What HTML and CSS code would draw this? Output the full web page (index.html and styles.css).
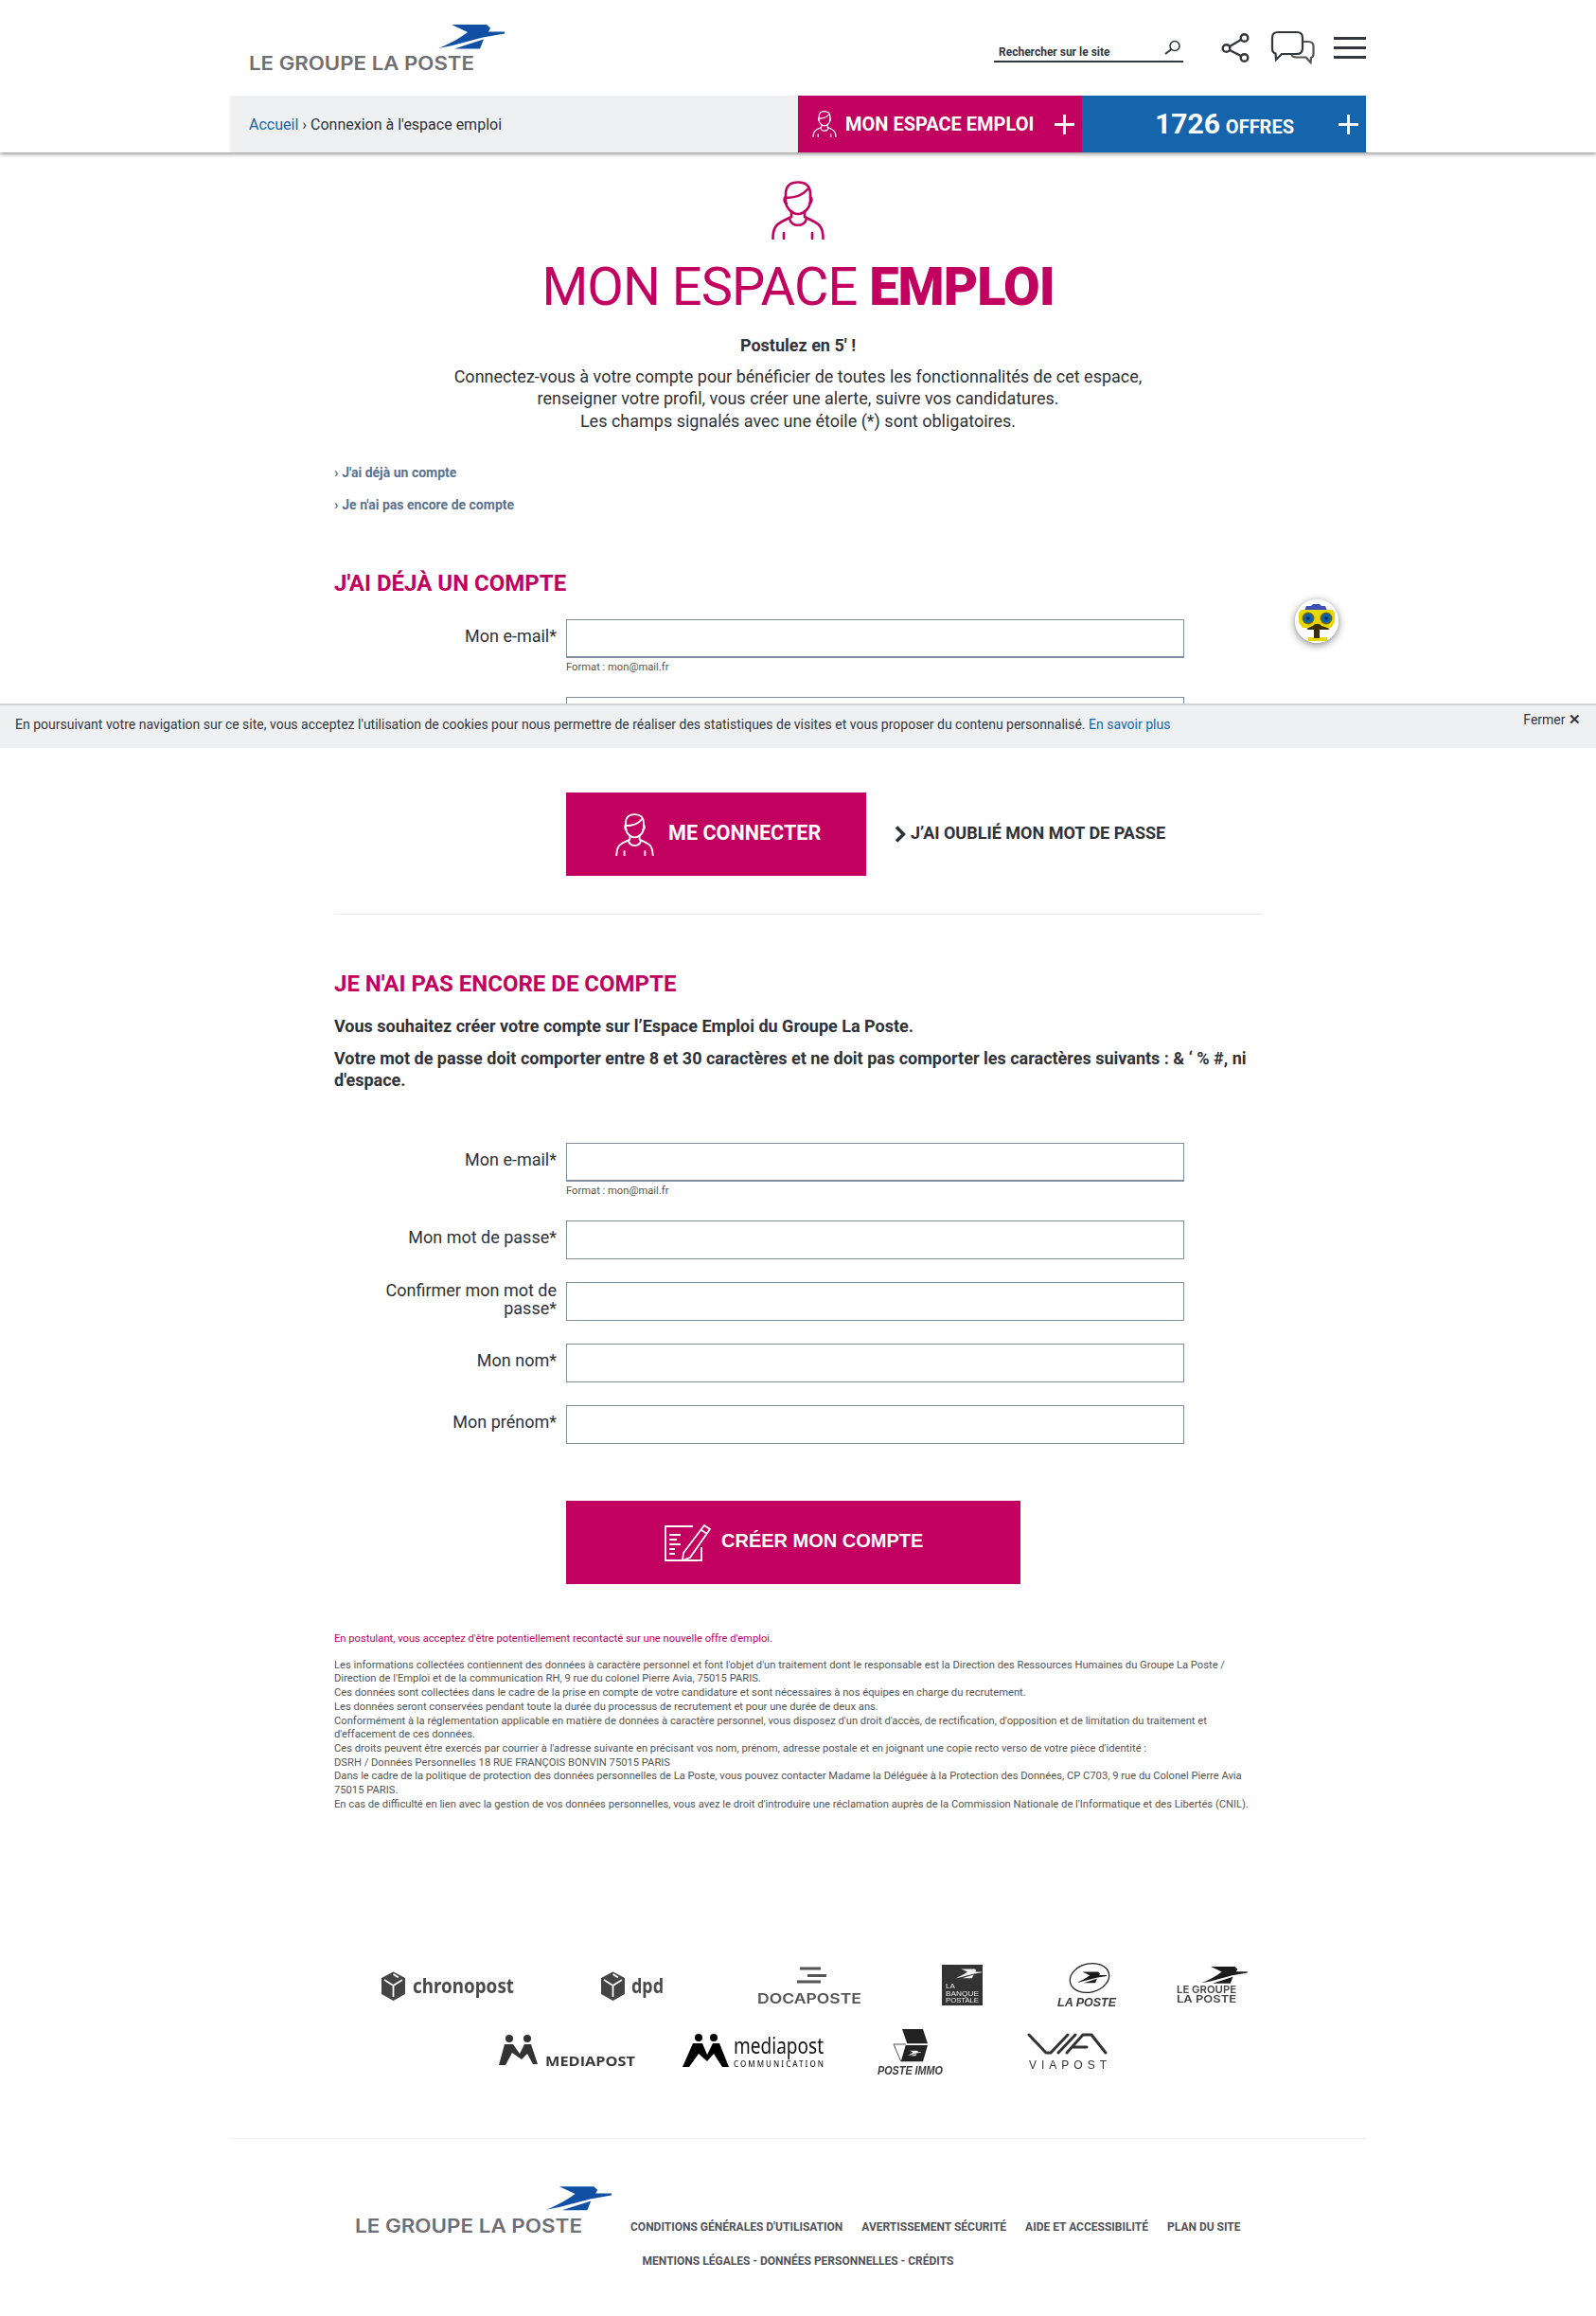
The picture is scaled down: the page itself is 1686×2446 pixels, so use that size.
FILE: index.html
```html
<!DOCTYPE html>
<html lang="fr">
<head>
<meta charset="utf-8">
<title>Mon espace emploi</title>
<link rel="stylesheet" href="styles.css">
</head>
<body>
<svg class="defs" width="0" height="0" aria-hidden="true">
  <symbol id="person" viewBox="0 0 56 62">
    <g fill="none" stroke="currentColor" stroke-width="2.6" stroke-linecap="round" stroke-linejoin="round">
      <path d="M15 14C15 5 20 1.500 28 1.500S41 5 41 14V21C41 29 34 35 28 35S15 29 15 21Z"/>
      <path d="M15 18C24 18 33 15 38 9"/>
      <path d="M15 17C13 18 13 23 16 24M41 17C43 18 43 23 40 24"/>
      <path d="M21 32V38L11 43C5 46 1.500 50 1.500 61M35 32V38L45 43C51 46 54.500 50 54.500 61"/>
      <path d="M19 40C21 49 35 49 37 40"/>
      <path d="M13 55V61M43 55V61"/>
    </g>
  </symbol>
  <symbol id="bird" viewBox="0 0 70 26">
    <path fill="currentColor" d="M14 0H51L55 3.500 53 7.500H70V9.500L47 13.500 15 22 0 25C10 21 22 15 31 8Z"/>
    <path fill="currentColor" d="M17 25.500 48 15.500 44 25.500Z"/>
  </symbol>
  <symbol id="plus" viewBox="0 0 21 21">
    <path fill="none" stroke="currentColor" stroke-width="3" d="M10.500 0V21M0 10.500H21"/>
  </symbol>
</svg>

<header class="site-header">
  <div class="wrap">
    <div class="top-row">
      <a class="brand" href="#">
        <svg class="brand-logo" width="270" height="48" viewBox="0 0 270 48">
          <use href="#bird" x="200" y="0" width="70" height="26" class="bird-blue"/>
          <text x="0" y="47.500" class="brand-text" textLength="238" lengthAdjust="spacingAndGlyphs">LE GROUPE LA POSTE</text>
        </svg>
      </a>
      <div class="tools">
        <div class="search">
          <span>Rechercher sur le site</span>
          <svg width="18" height="16" viewBox="0 0 18 16"><circle cx="11" cy="6.500" r="5" fill="none" stroke="#33373d" stroke-width="1.500"/><path d="M7.500 10 1 15" stroke="#33373d" stroke-width="2"/></svg>
        </div>
        <svg class="tool-share" width="28" height="31" viewBox="0 0 28 31"><g fill="none" stroke="#33373d" stroke-width="2.400"><circle cx="23.500" cy="5" r="3.800"/><circle cx="23.500" cy="26" r="3.800"/><circle cx="4.500" cy="16" r="3.800"/><path d="M8 14 20 7M8 18 20 24"/></g></svg>
        <svg class="tool-chat" width="46" height="34" viewBox="0 0 46 34"><g fill="none" stroke="#33373d" stroke-width="2.200"><path d="M7 1H27C31 1 33 3.500 33 7V18C33 21.500 31 24 27 24H11L5 30 4.500 23.500C2 23 1 20.500 1 18V7C1 3.500 3 1 7 1Z"/><path d="M33.500 11H39C42.500 11 44.500 13 44.500 16V24C44.500 26 43.500 27.500 42 28L41.500 33 36.500 27.500H26C23 27.500 22 26.500 21.500 24.500" stroke="#555"/></g></svg>
        <div class="burger"><i></i><i></i><i></i></div>
      </div>
    </div>
    <nav class="nav-row">
      <div class="crumbs"><a href="#">Accueil</a> › Connexion à l'espace emploi</div>
      <a class="nav-espace" href="#">
        <svg class="nav-person" width="26" height="28"><use href="#person"/></svg>
        <span>MON ESPACE EMPLOI</span>
        <svg class="nav-plus" width="21" height="21"><use href="#plus"/></svg>
      </a>
      <a class="nav-offres" href="#">
        <span class="count">1726</span><span class="offres">OFFRES</span>
        <svg class="nav-plus" width="21" height="21"><use href="#plus"/></svg>
      </a>
    </nav>
  </div>
</header>

<main class="main">
  <div class="hero">
    <svg class="hero-icon" width="56" height="62"><use href="#person"/></svg>
    <h1>MON ESPACE <strong>EMPLOI</strong></h1>
    <p class="hero-strong">Postulez en 5' !</p>
    <p class="hero-text">Connectez-vous à votre compte pour bénéficier de toutes les fonctionnalités de cet espace,<br>renseigner votre profil, vous créer une alerte, suivre vos candidatures.<br>Les champs signalés avec une étoile (*) sont obligatoires.</p>
  </div>

  <ul class="anchors">
    <li><a href="#c1">J'ai déjà un compte</a></li>
    <li><a href="#c2">Je n'ai pas encore de compte</a></li>
  </ul>

  <section id="c1">
    <h2 class="section-title first">J'AI DÉJÀ UN COMPTE</h2>
    <form class="form">
      <div class="row">
        <label>Mon e-mail*</label>
        <div class="field"><input type="text" class="strong-input"><small>Format : mon@mail.fr</small></div>
      </div>
      <div class="row">
        <label>Mon mot de passe*</label>
        <div class="field"><input type="password"></div>
      </div>
      <div class="actions">
        <a class="btn btn-login" href="#">
          <svg width="41" height="45"><use href="#person"/></svg>
          <span>ME CONNECTER</span>
        </a>
        <a class="forgot" href="#">
          <svg width="12" height="18" viewBox="0 0 12 18"><path d="M2 1.500 9.500 9 2 16.500" fill="none" stroke="#2e3238" stroke-width="3.500"/></svg>
          <span>J’AI OUBLIÉ MON MOT DE PASSE</span>
        </a>
      </div>
    </form>
  </section>

  <hr class="sep">

  <section id="c2">
    <h2 class="section-title">JE N'AI PAS ENCORE DE COMPTE</h2>
    <p class="bold-a">Vous souhaitez créer votre compte sur l’Espace Emploi du Groupe La Poste.</p>
    <p class="bold-b">Votre mot de passe doit comporter entre 8 et 30 caractères et ne doit pas comporter les caractères suivants : &amp; ‘ % #, ni d'espace.</p>
    <form class="form form-new">
      <div class="row">
        <label>Mon e-mail*</label>
        <div class="field"><input type="text" class="strong-input"><small>Format : mon@mail.fr</small></div>
      </div>
      <div class="row"><label>Mon mot de passe*</label><div class="field"><input type="password"></div></div>
      <div class="row"><label>Confirmer mon mot de passe*</label><div class="field"><input type="password"></div></div>
      <div class="row"><label>Mon nom*</label><div class="field"><input type="text"></div></div>
      <div class="row"><label>Mon prénom*</label><div class="field"><input type="text"></div></div>
      <div class="actions">
        <button class="btn btn-create" type="button">
          <svg width="50" height="40" viewBox="0 0 50 40"><g fill="none" stroke="#fff" stroke-width="1.800"><path d="M31 3H2V39H40V25"/><path d="M6 12H18M6 17H14M6 22H18M6 27H12M6 32H12" stroke-width="2"/><path d="M43 2 49 6 28 36 20 39 21 31ZM40 7 46 11"/></g></svg>
          <span>CRÉER MON COMPTE</span>
        </button>
      </div>
    </form>
  </section>

  <p class="legal-red">En postulant, vous acceptez d'être potentiellement recontacté sur une nouvelle offre d'emploi.</p>
  <p class="legal">Les informations collectées contiennent des données à caractère personnel et font l'objet d'un traitement dont le responsable est la Direction des Ressources Humaines du Groupe La Poste / Direction de l'Emploi et de la communication RH, 9 rue du colonel Pierre Avia, 75015 PARIS.<br>
  Ces données sont collectées dans le cadre de la prise en compte de votre candidature et sont nécessaires à nos équipes en charge du recrutement.<br>
  Les données seront conservées pendant toute la durée du processus de recrutement et pour une durée de deux ans.<br>
  Conformément à la réglementation applicable en matière de données à caractère personnel, vous disposez d'un droit d'accès, de rectification, d'opposition et de limitation du traitement et d'effacement de ces données.<br>
  Ces droits peuvent être exercés par courrier à l'adresse suivante en précisant vos nom, prénom, adresse postale et en joignant une copie recto verso de votre pièce d'identité :<br>
  DSRH / Données Personnelles 18 RUE FRANÇOIS BONVIN 75015 PARIS<br>
  Dans le cadre de la politique de protection des données personnelles de La Poste, vous pouvez contacter Madame la Déléguée à la Protection des Données, CP C703, 9 rue du Colonel Pierre Avia 75015 PARIS.<br>
  En cas de difficulté en lien avec la gestion de vos données personnelles, vous avez le droit d'introduire une réclamation auprès de la Commission Nationale de l'Informatique et des Libertés (CNIL).</p>
</main>

<section class="wrap partners">
  <div class="logo-row row-one">
    <svg class="logo lg-chrono" width="140" height="50" viewBox="0 0 140 50">
      <path fill="#444" d="M12.500 9.500 25 16V33L12.500 40 0 33V16Z"/>
      <path fill="none" stroke="#fff" stroke-width="1.800" d="M3 18 12.500 24 22 18M12.500 24V36M12.500 12 18 15.500"/>
      <text x="33" y="32" class="lg-round" textLength="107" lengthAdjust="spacingAndGlyphs">chronopost</text>
    </svg>
    <svg class="logo lg-dpd" width="66" height="50" viewBox="0 0 66 50">
      <path fill="#444" d="M12.500 9.500 25 16V33L12.500 40 0 33V16Z"/>
      <path fill="none" stroke="#fff" stroke-width="1.800" d="M3 18 12.500 24 22 18M12.500 24V36M12.500 12 18 15.500"/>
      <text x="32" y="32" class="lg-round" textLength="34" lengthAdjust="spacingAndGlyphs">dpd</text>
    </svg>
    <svg class="logo lg-doca" width="110" height="50" viewBox="0 0 110 50">
      <path fill="#555" d="M45 4.500H67V7.500H45ZM53 12H73V15H53ZM42 18.500H67V21.500H42Z"/>
      <text x="0" y="43" class="lg-doca-text" textLength="110" lengthAdjust="spacingAndGlyphs">DOCAPOSTE</text>
    </svg>
    <svg class="logo lg-banque" width="43" height="50" viewBox="0 0 43 50">
      <rect x="0" y="2" width="43" height="43" fill="#333"/>
      <use href="#bird" x="15" y="6" width="27" height="11" class="bird-white"/>
      <text x="4" y="27" class="lg-banque-text">LA</text>
      <text x="4" y="34.500" class="lg-banque-text" textLength="35" lengthAdjust="spacingAndGlyphs">BANQUE</text>
      <text x="4" y="42" class="lg-banque-text" textLength="35" lengthAdjust="spacingAndGlyphs">POSTALE</text>
    </svg>
    <svg class="logo lg-laposte" width="62" height="50" viewBox="0 0 62 50">
      <ellipse cx="34" cy="16" rx="21" ry="15" fill="none" stroke="#222" stroke-width="1.300" transform="rotate(-14 34 16)"/>
      <use href="#bird" x="20" y="9" width="32" height="13" class="bird-dark"/>
      <text x="0" y="46" class="lg-italic" textLength="62" lengthAdjust="spacingAndGlyphs">LA POSTE</text>
    </svg>
    <svg class="logo lg-groupe" width="75" height="50" viewBox="0 0 75 50">
      <use href="#bird" x="26" y="4" width="49" height="18" class="bird-dark"/>
      <text x="0" y="32" class="lg-groupe-text" textLength="63" lengthAdjust="spacingAndGlyphs">LE GROUPE</text>
      <text x="0" y="42" class="lg-groupe-text" textLength="63" lengthAdjust="spacingAndGlyphs">LA POSTE</text>
    </svg>
  </div>
  <div class="logo-row row-two">
    <svg class="logo lg-media" width="144" height="50" viewBox="0 0 144 50">
      <circle cx="11" cy="11" r="4" fill="#333"/><circle cx="30" cy="11" r="4" fill="#333"/>
      <path fill="#333" d="M6 17H15L22 27 27 17H34L41 38H36L30 27 24 33 14 26 7 39H0Z"/>
      <text x="49" y="40" class="lg-media-text" textLength="95" lengthAdjust="spacingAndGlyphs">MEDIAPOST</text>
    </svg>
    <svg class="logo lg-media2" width="149" height="50" viewBox="0 0 149 50">
      <circle cx="17" cy="10" r="4" fill="#000"/><circle cx="33" cy="10" r="4" fill="#000"/>
      <path fill="#000" d="M11 16H21L26 28 32 16H39L49 41H42L33 27 26 35 17 27 7 41H0Z"/>
      <text x="54" y="27" class="lg-media2-text" textLength="95" lengthAdjust="spacingAndGlyphs">mediapost</text>
      <text x="54" y="41" class="lg-media2-sub" textLength="95" lengthAdjust="spacing">COMMUNICATION</text>
    </svg>
    <svg class="logo lg-immo" width="69" height="50" viewBox="0 0 69 50">
      <path fill="#222" d="M26 1H48L53 16.300H31.300ZM29.700 18H53L48 35.300H24.700Z"/>
      <path fill="none" stroke="#555" d="M17 17H30M17 17 24.700 35"/>
      <use href="#bird" x="31" y="23" width="15" height="7" class="bird-white"/>
      <text x="0" y="49" class="lg-italic" textLength="69" lengthAdjust="spacingAndGlyphs">POSTE IMMO</text>
    </svg>
    <svg class="logo lg-via" width="84" height="50" viewBox="0 0 84 50">
      <g fill="none" stroke="#333" stroke-width="3" stroke-linecap="round" stroke-linejoin="round"><path d="M1 7 19 26H24L42 7"/><path d="M32 26 50 7"/><path d="M41 26 58 7H67L82 26"/><path d="M48 20H62"/></g>
      <text x="1" y="43" class="lg-via-text" textLength="82" lengthAdjust="spacing">VIAPOST</text>
    </svg>
  </div>
</section>

<footer class="wrap site-footer">
  <div class="foot-row">
    <svg class="foot-logo" width="271" height="51" viewBox="0 0 271 51">
      <use href="#bird" x="202" y="0" width="69" height="26" class="bird-blue"/>
      <text x="0" y="49" class="brand-text" textLength="240" lengthAdjust="spacingAndGlyphs">LE GROUPE LA POSTE</text>
    </svg>
    <ul class="foot-links">
      <li><a href="#">CONDITIONS GÉNÉRALES D'UTILISATION</a></li>
      <li><a href="#">AVERTISSEMENT SÉCURITÉ</a></li>
      <li><a href="#">AIDE ET ACCESSIBILITÉ</a></li>
      <li><a href="#">PLAN DU SITE</a></li>
    </ul>
  </div>
  <p class="foot-legal">MENTIONS LÉGALES - DONNÉES PERSONNELLES - CRÉDITS</p>
</footer>

<div class="cookie">
  <p>En poursuivant votre navigation sur ce site, vous acceptez l'utilisation de cookies pour nous permettre de réaliser des statistiques de visites et vous proposer du contenu personnalisé. <a href="#">En savoir plus</a></p>
  <span class="cookie-close">Fermer <b>✕</b></span>
</div>

<div class="bot">
  <svg width="46" height="46" viewBox="0 0 46 46">
    <ellipse cx="23" cy="23" rx="23" ry="23" fill="#fff"/>
    <path fill="#3b4fb5" d="M10 12 12 7H17L19 5H26L28 7H32L34 12Z"/>
    <path fill="#e8d800" d="M9 11H37C40 11 42 13 42 16V24L38 30H8L4 24V16C4 13 6 11 9 11Z"/>
    <circle cx="14" cy="20" r="6.500" fill="#6f6a10"/><circle cx="33" cy="20" r="6.500" fill="#6f6a10"/>
    <circle cx="14" cy="20" r="5" fill="#0d5fb0"/><circle cx="33" cy="20" r="5" fill="#0d5fb0"/>
    <circle cx="14" cy="20" r="1.800" fill="#06264f"/><circle cx="33" cy="20" r="1.800" fill="#06264f"/>
    <path fill="#3a2e08" d="M12 31 19 28C21 25 26 25 28 28L37 31 35 32 26 32V41H20V32L14 32Z"/>
    <path fill="#e8d800" d="M14 40H20V41H26V40H34V44H14Z"/>
  </svg>
</div>
</body>
</html>
```
FILE: styles.css
```css
* { box-sizing: border-box; }
html, body { margin: 0; padding: 0; }
body { font-family: Roboto, "Liberation Sans", sans-serif; color: #2e3238; background: #fff; position: relative; font-size: 18px; }
a { color: inherit; text-decoration: none; }
p, h1, h2, ul { margin: 0; padding: 0; }
ul { list-style: none; }
svg { overflow: visible; }
.defs { position: absolute; }
.wrap { width: 1200px; margin: 0 auto; }

.site-header { height: 161px; box-shadow: 0 2px 4px rgba(0,0,0,.4); position: relative; }
.top-row { height: 101px; display: flex; align-items: flex-start; }
.brand { margin: 26px 0 0 20px; display: block; }
.brand-logo, .foot-logo { display: block; }
.bird-blue { color: #0f50a5; }
.bird-white { color: #f2f2f2; }
.bird-dark { color: #1c1c1c; }
.brand-text { font-family: Inter, sans-serif; font-weight: 600; font-size: 19.500px; fill: #6e6e74; }
.tools { margin-left: auto; display: flex; align-items: flex-start; }
.search { width: 200px; height: 26px; margin-top: 40px; border-bottom: 2px solid #33373d; display: flex; justify-content: space-between; align-items: flex-start; padding: 2px 2px 0 5px; font-size: 12px; font-weight: 700; color: #33373d; }
.search span { line-height: 21px; margin-top: 3px; }
.tool-share { margin: 35px 0 0 41px; }
.tool-chat { margin: 33px 0 0 24px; }
.burger { width: 34px; height: 23px; margin: 39px 0 0 20px; display: flex; flex-direction: column; justify-content: space-between; }
.burger i { display: block; height: 3px; background: #33373d; }

.nav-row { height: 60px; display: flex; }
.crumbs { width: 600px; background: #eff0f2; padding: 1px 0 0 20px; line-height: 60px; font-size: 16px; color: #2e3238; }
.crumbs a { color: #1565ad; }
.nav-espace, .nav-offres { width: 300px; display: flex; align-items: center; color: #fff; font-weight: 700; position: relative; }
.nav-espace { background: #c10060; padding-left: 15px; font-size: 20px; }
.nav-espace span { margin-left: 9px; }
.nav-person { color: #fff; }
.nav-plus { color: #fff; position: absolute; right: 8px; top: 20px; }
.nav-offres { background: #1565ad; padding-left: 77px; }
.count { font-size: 30px; line-height: 60px; }
.offres { font-size: 20px; margin: 5px 0 0 6px; line-height: 50px; }

.main { width: 980px; margin: 0 auto; }
.hero { text-align: center; padding-top: 30px; }
.hero-icon { display: block; margin: 0 auto; color: #c10060; }
h1 { margin-top: 20px; font-size: 56px; line-height: 60px; font-weight: 400; color: #c10060; letter-spacing: -.95px; }
h1 strong { font-weight: 900; }
.hero-strong { margin-top: 20px; font-size: 18px; line-height: 24px; font-weight: 700; }
.hero-text { margin-top: 9px; line-height: 23.400px; font-size: 18px; }

.anchors { margin-top: 33px; font-size: 14px; font-weight: 700; color: #5a7290; line-height: 20px; display: flex; flex-direction: column; gap: 14px; }
.anchors a::before { content: "› "; font-weight: 700; font-size: 15px; }

.section-title { font-size: 24px; line-height: 30px; font-weight: 700; color: #c10060; }
.first { margin-top: 58px; }
.form { margin-top: 23px; display: flex; flex-direction: column; gap: 24px; }
.form-new { margin-top: 55px; }
.row { display: grid; grid-template-columns: 235px 653px; column-gap: 10px; }
.row label { align-self: start; padding: 0 0 0 30px; text-align: right; line-height: 18.500px; height: 37px; display: flex; align-items: center; justify-content: flex-end; font-size: 18px; }
.row input { display: block; width: 653px; height: 41px; border: 1px solid #7f8d9c; background: #fff; border-radius: 0; padding: 0 8px; }
.row input.strong-input { border-bottom-width: 2px; }
.row small { display: block; font-size: 11.200px; line-height: 17px; margin-top: 1px; margin-bottom: -1px; color: #555; }

.actions { margin-top: 36px; margin-left: 245px; display: flex; align-items: center; }
.btn { display: flex; align-items: center; background: #c10060; color: #fff; border: 0; font-weight: 700; height: 88px; }
.btn-login { width: 317px; padding-left: 52px; font-size: 21.600px; }
.btn-login span { margin-left: 15px; margin-top: -4px; }
.forgot { margin-left: 30px; display: flex; align-items: center; gap: 5px; font-size: 18px; font-weight: 700; color: #2e3238; }
.forgot span { margin-top: -3px; }
.forgot svg { margin-top: -1px; }
.btn-create { width: 480px; padding: 0 0 0 103px; font-family: "Liberation Sans", Arial, sans-serif; font-size: 20px; }
.btn-create span { margin-left: 11px; margin-top: -4px; }

.sep { border: 0; border-top: 1px solid #eaeaea; margin: 40px 0 58px; }
.bold-a { margin-top: 19px; font-weight: 700; line-height: 22px; font-size: 18px; }
.bold-b { margin-top: 11px; font-weight: 700; line-height: 23px; font-size: 18px; }

.legal-red { margin-top: 50px; font-size: 11.200px; line-height: 15px; color: #c10060; }
.legal { margin-top: 13.500px; font-size: 11.200px; line-height: 14.700px; color: #555; }

.partners { margin-top: 159.500px; }
.logo-row { display: flex; }
.logo { display: block; filter: blur(.3px); }
.row-one { padding-left: 160px; }
.row-two { margin-top: 19px; padding-left: 284px; }
.lg-dpd { margin-left: 92px; }
.lg-doca { margin-left: 99px; }
.lg-banque { margin-left: 85px; }
.lg-laposte { margin-left: 79px; }
.lg-groupe { margin-left: 64px; }
.lg-media2 { margin-left: 50px; }
.lg-immo { margin-left: 57px; }
.lg-via { margin-left: 90px; }
.lg-round { font-family: "Noto Sans", sans-serif; font-weight: 700; font-size: 22px; fill: #4a4a4a; }
.lg-doca-text { font-family: Inter, sans-serif; font-weight: 600; font-size: 15px; fill: #555; }
.lg-banque-text { font-family: "Liberation Sans", sans-serif; font-size: 8px; fill: #eee; }
.lg-italic { font-family: "Liberation Sans", sans-serif; font-weight: 700; font-style: italic; font-size: 12px; fill: #3a3a3a; }
.lg-groupe-text { font-family: Inter, sans-serif; font-weight: 600; font-size: 11px; fill: #444; }
.lg-media-text { font-family: "Open Sans", sans-serif; font-weight: 700; font-size: 14px; fill: #3a3a3a; }
.lg-media2-text { font-family: "Noto Sans", sans-serif; font-size: 23px; fill: #111; }
.lg-media2-sub { font-family: "Noto Sans", sans-serif; font-size: 8px; font-weight: 500; fill: #222; }
.lg-via-text { font-family: "Liberation Sans", sans-serif; font-size: 12px; fill: #333; }

.site-footer { margin-top: 66px; border-top: 1px solid #eee; padding-top: 50px; }
.foot-row { display: flex; padding-left: 132px; align-items: flex-end; }
.foot-links { display: flex; gap: 20px; margin: 0 0 0 20px; font-size: 12px; font-weight: 700; color: #50525a; line-height: 16px; }
.foot-legal { margin-top: 20px; text-align: center; font-size: 12px; font-weight: 700; line-height: 16px; color: #50525a; }

.cookie { position: absolute; top: 743px; left: 0; right: 0; height: 47px; background: #eff0f2; border-top: 2px solid #cfd1d4; display: flex; justify-content: space-between; align-items: flex-start; padding: 0 16px; font-size: 14px; color: #33373d; z-index: 5; }
.cookie p { line-height: 18px; margin-top: 11px; }
.cookie a { color: #1565ad; }
.cookie-close { line-height: 18px; margin-top: 6px; }
.cookie-close b { font-size: 15px; }

.bot { position: absolute; left: 1368px; top: 633px; width: 46px; height: 46px; border-radius: 50%; box-shadow: 0 2px 8px rgba(0,0,0,.5); background: #fff; }
.bot svg { display: block; border-radius: 50%; }
```
